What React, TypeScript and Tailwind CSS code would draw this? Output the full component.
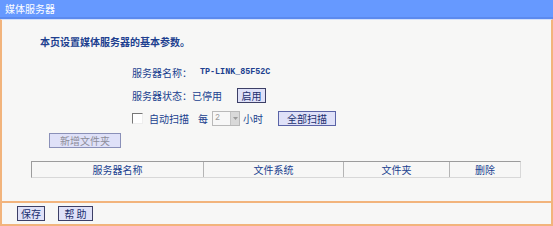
import React from 'react';

const cjk = { fontFamily: '"SimSun", "Noto Sans CJK SC", sans-serif' };
const mono = { fontFamily: '"Liberation Mono", monospace' };

const Btn: React.FC<{ children: React.ReactNode; className?: string; disabled?: boolean }> = ({
  children,
  className = '',
  disabled,
}) => (
  <button
    type="button"
    disabled={disabled}
    className={`shrink-0 whitespace-nowrap flex items-center justify-center h-[15px] text-[10px] leading-none bg-[#dfe1f8] border ${
      disabled ? 'text-[#8d8d9a] border-[#8a90b8]' : 'text-[#1b2f6e] border-[#3c3f66]'
    } ${className}`}
    style={cjk}
  >
    {children}
  </button>
);

const App: React.FC = () => {
  return (
    <div className="w-[553px] h-[226px] flex flex-col text-[10px] text-[#203f8f] whitespace-nowrap" style={cjk}>
      <div className="h-[19px] bg-[#6699ff] border-b-2 border-[#5c8aee] flex items-center pl-[5px] text-white">
        媒体服务器
      </div>
      <div className="flex-1 flex flex-col bg-[#f7f7f6] border-t border-[#d4e1fb] border-x-2 border-b-2 border-x-[#f2b47c] border-b-[#f2b47c]">
        <div className="h-[181px] flex flex-col">
          <div className="pt-[13px] pl-[38px] h-[29px] flex items-center font-bold">本页设置媒体服务器的基本参数。</div>
          <div className="mt-[12px] pl-[130px] flex flex-col">
            <div className="h-[23px] flex items-center">
              <span className="w-[68px] shrink-0">服务器名称：</span>
              <span className="text-[8.4px] font-bold" style={mono}>TP-LINK_85F52C</span>
            </div>
            <div className="h-[23px] flex items-center">
              <span className="shrink-0">服务器状态：</span>
              <span>已停用</span>
              <Btn className="ml-[15px] w-[29px] border-[#1d1d3a]">启用</Btn>
            </div>
            <div className="h-[23px] flex items-center">
              <span className="shrink-0 w-[11px] h-[11px] bg-white border-t border-l border-[#777] border-b border-r border-b-[#eee] border-r-[#eee]" />
              <span className="ml-[6px]">自动扫描</span>
              <span className="ml-[9px]">每</span>
              <span className="ml-[4px] w-[28px] h-[15px] flex items-center border border-[#b9b9b9] bg-[#f7f7f7]">
                <span className="flex-1 pl-[2px] text-[8.4px] text-[#9a9a9a]" style={mono}>2</span>
                <span className="w-[9px] h-[13px] bg-[#d9d9d9] border-l border-[#c4c4c4] flex items-center justify-center">
                  <svg width="5" height="3" viewBox="0 0 5 3">
                    <path d="M0 0h5L2.5 3z" fill="#9a9a9a" />
                  </svg>
                </span>
              </span>
              <span className="ml-[3px]">小时</span>
              <Btn className="ml-[15px] w-[58px] border-[#5a63a6]">全部扫描</Btn>
            </div>
          </div>
          <div className="mt-[3px] pl-[47px]">
            <Btn disabled className="w-[72px]">新增文件夹</Btn>
          </div>
          <div className="mt-[13px] ml-[29px] w-[490px] h-[17px] flex border border-[#9c9c9c] border-b-[#d8d8d8] border-r-[#d8d8d8]">
            <div className="w-[172px] flex items-center justify-center border-r border-[#b5b5b5]">服务器名称</div>
            <div className="w-[140px] flex items-center justify-center border-r border-[#b5b5b5]">文件系统</div>
            <div className="w-[106px] flex items-center justify-center border-r border-[#b5b5b5]">文件夹</div>
            <div className="flex-1 flex items-center justify-center">删除</div>
          </div>
        </div>
        <div className="flex-1 border-t-2 border-[#f2b47c] flex items-center pl-[15px] gap-[13px]">
          <Btn className="w-[28px]">保存</Btn>
          <Btn className="w-[35px]">帮&nbsp;助</Btn>
        </div>
      </div>
    </div>
  );
};

export default App;
